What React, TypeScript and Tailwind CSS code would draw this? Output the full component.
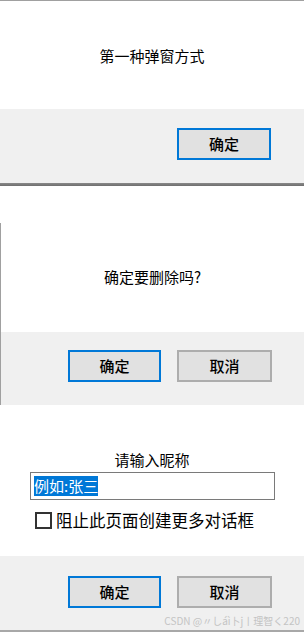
const font = { fontFamily: '"Noto Sans CJK SC", "Microsoft YaHei", sans-serif' };

function Btn({ label, focused }: { label: string; focused?: boolean }) {
  return (
    <div
      className={
        "h-[32px] flex items-center justify-center bg-[#e1e1e1] text-[15px] font-medium text-black " +
        (focused ? "border-2 border-[#0078d7]" : "border-2 border-[#adadad]")
      }
    >
      {label}
    </div>
  );
}

export default function App() {
  return (
    <div className="w-[304px] h-[632px] bg-white overflow-hidden flex flex-col" style={font}>
      {/* alert */}
      <div className="border-t border-[#a0a0a0] flex flex-col">
        <div className="h-[108px] flex items-center justify-center text-[15px] text-black pt-[2px]">第一种弹窗方式</div>
        <div className="h-[74px] bg-[#f0f0f0] flex justify-end pr-[33px] pt-[19px]">
          <div className="w-[94px]">
            <Btn label="确定" focused />
          </div>
        </div>
        <div className="h-[3px] bg-gradient-to-b from-[#8a8a8a] to-[#6e6e6e]" />
      </div>

      <div className="h-[37px]" />

      {/* confirm */}
      <div className="border-l border-[#a0a0a0] flex flex-col">
        <div className="h-[109px] flex items-center justify-center text-[15px] text-black">确定要删除吗?</div>
        <div className="h-[73px] bg-[#f0f0f0] flex justify-end pr-[32px] pt-[18px] gap-[16px]">
          <div className="w-[93px]">
            <Btn label="确定" focused />
          </div>
          <div className="w-[95px]">
            <Btn label="取消" />
          </div>
        </div>
      </div>

      {/* prompt */}
      <div className="flex flex-col">
        <div className="h-[151px] flex flex-col pt-[45px]">
          <div className="text-center text-[15px] text-black leading-[20px]">请输入昵称</div>
          <div className="mt-[2px] ml-[30px] w-[245px] h-[28px] border border-[#7a7a7a] flex items-center px-[3px]">
            <span className="bg-[#0078d7] text-white text-[15px] leading-[20px]">例如:张三</span>
          </div>
          <div className="mt-[9px] ml-[35px] flex items-center gap-[4px]">
            <div className="w-[17px] h-[17px] border-2 border-[#333333] bg-white" />
            <span className="text-[16.5px] text-black leading-[22px]">阻止此页面创建更多对话框</span>
          </div>
        </div>
        <div className="relative h-[74px] bg-[#f0f0f0] flex justify-end pr-[32px] pt-[20px] gap-[16px]">
          <div className="w-[93px]">
            <Btn label="确定" focused />
          </div>
          <div className="w-[95px]">
            <Btn label="取消" />
          </div>
          <div className="absolute right-[4px] bottom-[3px] text-[10px] leading-[12px] text-[#c4c4c4]">
            CSDN @〃しáì卜j丨理智く220
          </div>
        </div>
        <div className="h-[2px] bg-[#a8a8a8]" />
      </div>
    </div>
  );
}
